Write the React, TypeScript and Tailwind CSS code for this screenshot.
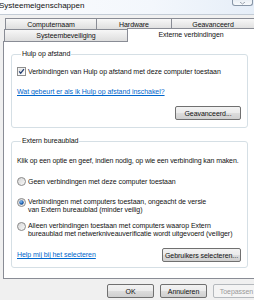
import type { ReactNode } from 'react'

function Btn({ children, disabled, className = '' }: { children: ReactNode; disabled?: boolean; className?: string }) {
  return (
    <div
      className={
        'h-[14px] flex items-center justify-center rounded-[2px] border text-[7px] leading-none shrink-0 ' +
        (disabled
          ? 'border-[#b5b9bd] bg-[#f4f4f4] text-[#9a9a9a] '
          : 'border-[#707070] bg-[linear-gradient(#f2f2f2_0%,#ebebeb_50%,#dddddd_50%,#cfcfcf_100%)] text-[#111] ') +
        className
      }
    >
      {children}
    </div>
  )
}

function Check() {
  return (
    <svg width="9" height="9" viewBox="0 0 9 9" className="shrink-0">
      <defs>
        <linearGradient id="cb" x1="0" y1="0" x2="1" y2="1">
          <stop offset="0" stopColor="#dcdcdc" />
          <stop offset="1" stopColor="#fbfbfb" />
        </linearGradient>
      </defs>
      <rect x="0.5" y="0.5" width="8" height="8" fill="#fff" stroke="#8e8f8f" />
      <rect x="1.5" y="1.5" width="6" height="6" fill="url(#cb)" />
      <path d="M2.2 4.4 L3.7 6.3 L6.9 2.1" fill="none" stroke="#1f3c6e" strokeWidth="1.3" />
    </svg>
  )
}

function Radio({ on }: { on?: boolean }) {
  return (
    <svg width="9" height="9" viewBox="0 0 9 9" className="shrink-0">
      <defs>
        <linearGradient id="rb" x1="0" y1="0" x2="1" y2="1">
          <stop offset="0" stopColor="#d4d4d4" />
          <stop offset="1" stopColor="#fbfbfb" />
        </linearGradient>
        <radialGradient id="rd" cx="0.4" cy="0.35" r="0.7">
          <stop offset="0" stopColor="#8ec3f5" />
          <stop offset="0.6" stopColor="#2468b8" />
          <stop offset="1" stopColor="#0b3a74" />
        </radialGradient>
      </defs>
      <circle cx="4.5" cy="4.5" r="4" fill="url(#rb)" stroke="#8a8a8a" />
      {on && <circle cx="4.5" cy="4.5" r="2.2" fill="url(#rd)" />}
    </svg>
  )
}

function Tab({ children, className = '' }: { children: ReactNode; className?: string }) {
  return (
    <div
      className={
        'flex items-center justify-center border-t border-l border-[#898c95] bg-[linear-gradient(#f7f7f7,#dedede)] text-[7px] leading-none ' +
        className
      }
    >
      {children}
    </div>
  )
}

export default function App() {
  return (
    <div className="w-[254px] h-[300px] overflow-hidden bg-[#f0f0f0] flex flex-col font-['Liberation_Sans',Arial,sans-serif] text-[#111] tracking-[-0.05px]">
      {/* title bar */}
      <div className="h-[15px] shrink-0 flex justify-between items-start bg-[linear-gradient(90deg,#fbfcfe,#f3f7fc_60%,#e6eef8)] border-b border-[#c3ccd6]">
        <span className="text-[8px] leading-[12px] -ml-[1px] tracking-normal">Systeemeigenschappen</span>
        <div className="w-[21px] h-[6px] mr-[1px] rounded-b-[3px] border border-t-0 border-[#8795a6] bg-[linear-gradient(#e9eef4,#f8fafc)] flex justify-center items-end">
          <svg width="7" height="3" viewBox="0 0 7 3">
            <path d="M1 0 L3.5 2 L6 0" fill="none" stroke="#9aa3ad" strokeWidth="1" />
          </svg>
        </div>
      </div>

      <div className="pt-[3px] pl-[3px] flex flex-col shrink-0">
        {/* back row of tabs */}
        <div className="h-[11px] flex pl-[2px]">
          <Tab className="w-[91px]">Computernaam</Tab>
          <Tab className="w-[75px]">Hardware</Tab>
          <Tab className="flex-1">Geavanceerd</Tab>
        </div>
        {/* front row of tabs */}
        <div className="h-[12px] flex pl-[1px]">
          <Tab className="w-[123px]">Systeembeveiliging</Tab>
          <div className="flex-1 h-[14px] -mt-[1px] relative z-10 bg-white border-t border-l border-[#898c95] flex items-center justify-center text-[7px] leading-none pb-[2px]">
            Externe verbindingen
          </div>
        </div>

        {/* tab panel */}
        <div className="h-[238px] bg-white border border-r-0 border-[#898c95] pl-[7px] pr-[6px] pt-[8px] flex flex-col text-[7px] leading-[8px]">
          <fieldset className="border border-[#d5dfe5] rounded-[3px] pl-[5px] pr-[6px] pb-[7px] m-0 min-w-0">
            <legend className="ml-[4px] px-[1px] text-[7px] leading-[8px]">Hulp op afstand</legend>
            <div className="flex flex-col">
              <div className="mt-[9px] flex items-center gap-[2px]">
                <Check />
                <span>Verbindingen van Hulp op afstand met deze computer toestaan</span>
              </div>
              <span className="mt-[12px] text-[#0066cc] underline">Wat gebeurt er als ik Hulp op afstand inschakel?</span>
              <div className="mt-[10px] flex justify-end">
                <Btn className="w-[66px]">Geavanceerd...</Btn>
              </div>
            </div>
          </fieldset>

          <fieldset className="mt-[9px] border border-[#d5dfe5] rounded-[3px] pl-[5px] pr-[6px] pb-[5px] m-0 min-w-0">
            <legend className="ml-[4px] px-[1px] text-[7px] leading-[8px]">Extern bureaublad</legend>
            <div className="flex flex-col">
              <span className="mt-[12px] whitespace-nowrap tracking-[-0.1px]">Klik op een optie en geef, indien nodig, op wie een verbinding kan maken.</span>
              <div className="mt-[12px] flex items-center gap-[2px]">
                <Radio />
                <span>Geen verbindingen met deze computer toestaan</span>
              </div>
              <div className="mt-[12px] flex items-start gap-[2px]">
                <Radio on />
                <span>
                  Verbindingen met computers toestaan, ongeacht de versie
                  <br />
                  van Extern bureaublad (minder veilig)
                </span>
              </div>
              <div className="mt-[8px] flex items-start gap-[2px]">
                <Radio />
                <span>
                  Alleen verbindingen toestaan met computers waarop Extern
                  <br />
                  bureaublad met netwerkniveauverificatie wordt uitgevoerd (veiliger)
                </span>
              </div>
              <div className="mt-[10px] flex items-center justify-between">
                <span className="text-[#0066cc] underline">Help mij bij het selecteren</span>
                <Btn className="w-[79px]">Gebruikers selecteren...</Btn>
              </div>
            </div>
          </fieldset>
        </div>
      </div>

      {/* dialog buttons */}
      <div className="mt-[5px] flex gap-[6px] pl-[107px] shrink-0">
        <Btn className="w-[47px]">OK</Btn>
        <Btn className="w-[47px]">Annuleren</Btn>
        <Btn disabled className="w-[47px]">Toepassen</Btn>
      </div>
    </div>
  )
}
